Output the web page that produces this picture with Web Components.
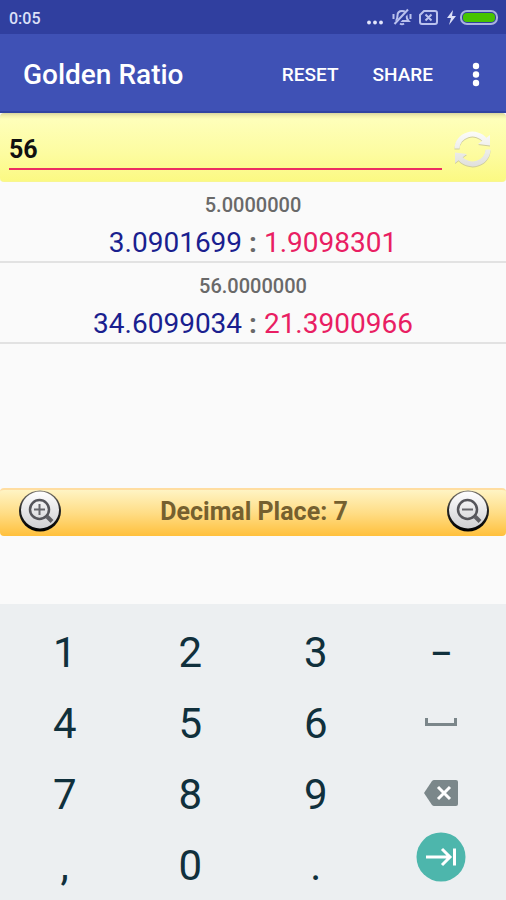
<!DOCTYPE html>
<html lang="en">
<head>
<meta charset="utf-8">
<meta name="viewport" content="width=device-width, initial-scale=1">
<title>Golden Ratio</title>
<style>
html, body { margin: 0; }
body { font-family: Roboto, "Liberation Sans", sans-serif; background: #fafafa; color: #000; }
</style>
</head>
<body>
<golden-app></golden-app>
<script>
const define = (name, html, setup) => {
  const template = document.createElement('template');
  template.innerHTML = `<style>
    *, *::before { box-sizing: border-box; }
    button { font: inherit; color: inherit; background: none; border: 0; margin: 0; padding: 0; cursor: pointer; }
    svg { display: block; }
  </style>` + html;
  customElements.define(name, class extends HTMLElement {
    constructor() {
      super();
      this.attachShadow({ mode: 'open' }).append(template.content.cloneNode(true));
      if (setup) setup(this, this.shadowRoot);
    }
  });
};

define('status-bar', `
<style>
:host { display: flex; align-items: center; justify-content: space-between; height: 34px; padding: 2px 6px 0 9px; box-sizing: border-box; background: #303f9f; color: #dce0f8; font-size: 16px; font-weight: 500; }
</style>
<span>0:05</span>
<svg width="138" height="24" viewBox="0 0 138 24" fill="none" stroke="#bac2ee" stroke-width="2" aria-hidden="true">
  <g fill="#e2e5fb" stroke="none"><circle cx="13" cy="16.500" r="1.900"/><circle cx="7" cy="16.500" r="1.900"/><circle cx="19" cy="16.500" r="1.900"/></g>
  <path d="M34 15h12.500c-2-2-2-3.500-2-5.500 0-3-1.500-4.500-4.500-4.500s-4.500 1.500-4.500 4.500c0 2 0 3.500-1.500 5.500M38 17.500q2 1.500 4 0M31.500 8v5M48.500 8v5"/>
  <path d="M34 18L47 4" stroke="#303f9f" stroke-width="4"/>
  <path d="M32.500 18L46 3.500"/>
  <path d="M62 5h11q2 0 2 2v9q0 2-2 2H60q-2 0-2-2V9zM63.500 8.500l6 6M69.500 8.500l-6 6"/>
  <path d="M91 4l-6 8h4l-2 7 7-9h-4z" fill="#dce0f8" stroke="none"/>
  <rect x="99" y="5" width="36" height="13" rx="6" fill="#303f9f" stroke="#a9b2df"/>
  <rect x="101" y="7" width="32" height="9" rx="4" fill="#46c400" stroke="none"/>
</svg>`);

define('app-bar', `
<style>
:host { display: flex; align-items: center; height: 79px; box-sizing: border-box; padding: 4px 4px 0 23px; background: #3f51b5; color: #fff; border-bottom: 2px solid #3144a1; }
h1 { flex: 1; margin: 0; font-size: 28px; line-height: 36px; font-weight: 500; white-space: nowrap; }
button { height: 48px; padding: 0 17px; font-size: 19px; font-weight: 500; }
.more { padding: 0; width: 52px; display: grid; place-items: center; }
</style>
<h1>Golden Ratio</h1>
<button>RESET</button><button>SHARE</button>
<button class="more" aria-label="More options"><svg width="8" height="28" viewBox="0 0 8 28" fill="#fff"><circle cx="4" cy="5" r="3.200"/><circle cx="4" cy="13.500" r="3.200"/><circle cx="4" cy="22" r="3.200"/></svg></button>`);

define('value-entry', `
<style>
:host { display: flex; align-items: center; gap: 12px; height: 69px; box-sizing: border-box; padding: 5px 15px 0 9px; border: solid #f8f690; border-width: 0 0 1px; border-radius: 4px; background: linear-gradient(#d8d6a0 0, #f3f1ad 3px, #feffba 6px, #fdfca0 60%, #fbf983); }
input { flex: 1; min-width: 0; height: 41px; border: 0; border-bottom: 2px solid #ec2d62; border-radius: 0; padding: 2px 0 0; margin: 0; background: none; outline: 0; font: 700 25px Roboto, sans-serif; color: #111; }
</style>
<input type="text" inputmode="decimal" aria-label="Value" value="56">
<button aria-label="Swap"><svg width="37" height="37" viewBox="0 0 37 37">
  <defs><linearGradient id="g" gradientUnits="userSpaceOnUse" x1="0" y1="0" x2="0" y2="36"><stop stop-color="#fcfcfa"/><stop offset="1" stop-color="#e0e0dc"/></linearGradient>
  <g id="arrows"><path d="M3 17.500A15.500 14.500 0 0 1 31 9M34 18.500A15.500 14.500 0 0 1 6 27" fill="none" stroke-width="5"/><path d="M36 4v10.500L24 13zM1 32V21.500L13 23z" stroke="none"/></g></defs>
  <g fill="#cfcd9c" stroke="#cfcd9c" transform="translate(0 1)"><use href="#arrows"/></g>
  <g fill="url(#g)" stroke="url(#g)"><use href="#arrows"/></g>
</svg></button>`);

define('ratio-row', `
<style>
:host { display: flex; flex-direction: column; gap: 6px; padding: 9px 0 0; border-bottom: 2px solid #e2e2e2; text-align: center; color: #696969; }
.total { font-size: 20px; line-height: 28px; font-weight: 500; }
.parts { font-size: 28px; line-height: 36px; }
.long { color: #1a1f8f; }
.short { color: #e91e63; }
b { font-weight: 700; }
</style>
<div class="total"><slot name="total"></slot></div>
<div class="parts"><span class="long"><slot name="long"></slot></span> <b>:</b> <span class="short"><slot name="short"></slot></span></div>`);

define('zoom-button', `
<style>
:host { display: block; }
</style>
<button><svg width="42" height="42" viewBox="0 0 42 42" fill="none">
  <defs><linearGradient id="g" x2="0" y2="1"><stop stop-color="#fff"/><stop offset="1" stop-color="#cfcfd2"/></linearGradient>
  <linearGradient id="r" x2="0" y2="1"><stop stop-color="#77736a"/><stop offset=".5" stop-color="#222"/><stop offset="1" stop-color="#000"/></linearGradient></defs>
  <ellipse cx="21" cy="21" rx="21" ry="20.500" fill="url(#r)"/><ellipse cx="21" cy="20" rx="19" ry="18.500" fill="url(#g)"/>
  <circle cx="20.500" cy="19.500" r="9.500" stroke="#55555a" stroke-width="2.500"/>
  <path d="M28 26.500l5 5" stroke="#606065" stroke-width="4"/>
  <path class="sign" stroke="#66666b" stroke-width="2"/>
</svg></button>`, (host, root) => {
  const plus = host.getAttribute('kind') === 'in';
  root.querySelector('button').setAttribute('aria-label', plus ? 'More decimals' : 'Fewer decimals');
  root.querySelector('.sign').setAttribute('d', plus ? 'M15 19.500h11M20.500 14v11' : 'M15 19.500h11');
});

define('decimal-bar', `
<style>
:host { display: flex; align-items: center; justify-content: space-between; height: 48px; box-sizing: border-box; padding: 0 17px 0 19px; border-top: 2px solid #ffdda0; border-radius: 4px; background: linear-gradient(#fff4c4, #ffdd86 50%, #ffc03c); }
span { font-size: 25px; line-height: 32px; padding-bottom: 2px; font-weight: 700; color: #75602f; }
</style>
<zoom-button kind="in"></zoom-button><span><slot></slot></span><zoom-button kind="out"></zoom-button>`);

define('number-pad', `
<style>
:host { display: grid; grid-template-columns: repeat(4, 1fr); grid-auto-rows: 71px; padding: 12px 2px 0; background: #eceff1; color: #10303c; font-size: 42px; }
button { display: grid; place-items: center; line-height: 48px; padding-top: 2px; }
.icon { padding: 0 0 2px; }
.minus { font-size: 34px; font-weight: 500; }
.next { padding: 0 0 16px; }
</style>
<button>1</button><button>2</button><button>3</button><button class="minus">–</button>
<button>4</button><button>5</button><button>6</button>
<button class="icon" aria-label="Space"><svg width="32" height="10" viewBox="0 0 32 10" fill="none" stroke="#7b868a" stroke-width="3"><path d="M1.500 1v6.500h29V1"/></svg></button>
<button>7</button><button>8</button><button>9</button>
<button class="icon" aria-label="Backspace"><svg width="34" height="26" viewBox="0 0 34 26"><path d="M10 0h22q2 0 2 2v22q0 2-2 2H10q-1 0-2-1L0 13 8 1q1-1 2-1z" fill="#7b878a"/><path d="M14 7l12 12M26 7L14 19" stroke="#fff" stroke-width="3" fill="none"/></svg></button>
<button>,</button><button>0</button><button>.</button>
<button class="next" aria-label="Next"><svg width="50" height="50" viewBox="0 0 50 50" fill="none" stroke="#fff" stroke-width="3"><circle cx="25" cy="25" r="24.500" fill="#4db6ac" stroke="none"/><path d="M10 25h24M26 17l8 8-8 8M38.500 16.500v17"/></svg></button>`);

define('golden-app', `
<style>
:host { display: flex; flex-direction: column; min-height: 100vh; }
main { flex: 1; display: flex; flex-direction: column; }
section { flex: 1; }
decimal-bar { margin: 16px 0 68px; }
</style>
<status-bar></status-bar>
<app-bar></app-bar>
<main>
  <value-entry></value-entry>
  <section aria-label="Results">
    <ratio-row><span slot="total">5.0000000</span><span slot="long">3.0901699</span><span slot="short">1.9098301</span></ratio-row>
    <ratio-row><span slot="total">56.0000000</span><span slot="long">34.6099034</span><span slot="short">21.3900966</span></ratio-row>
  </section>
  <decimal-bar>Decimal Place: 7</decimal-bar>
</main>
<number-pad></number-pad>`);
</script>
</body>
</html>
